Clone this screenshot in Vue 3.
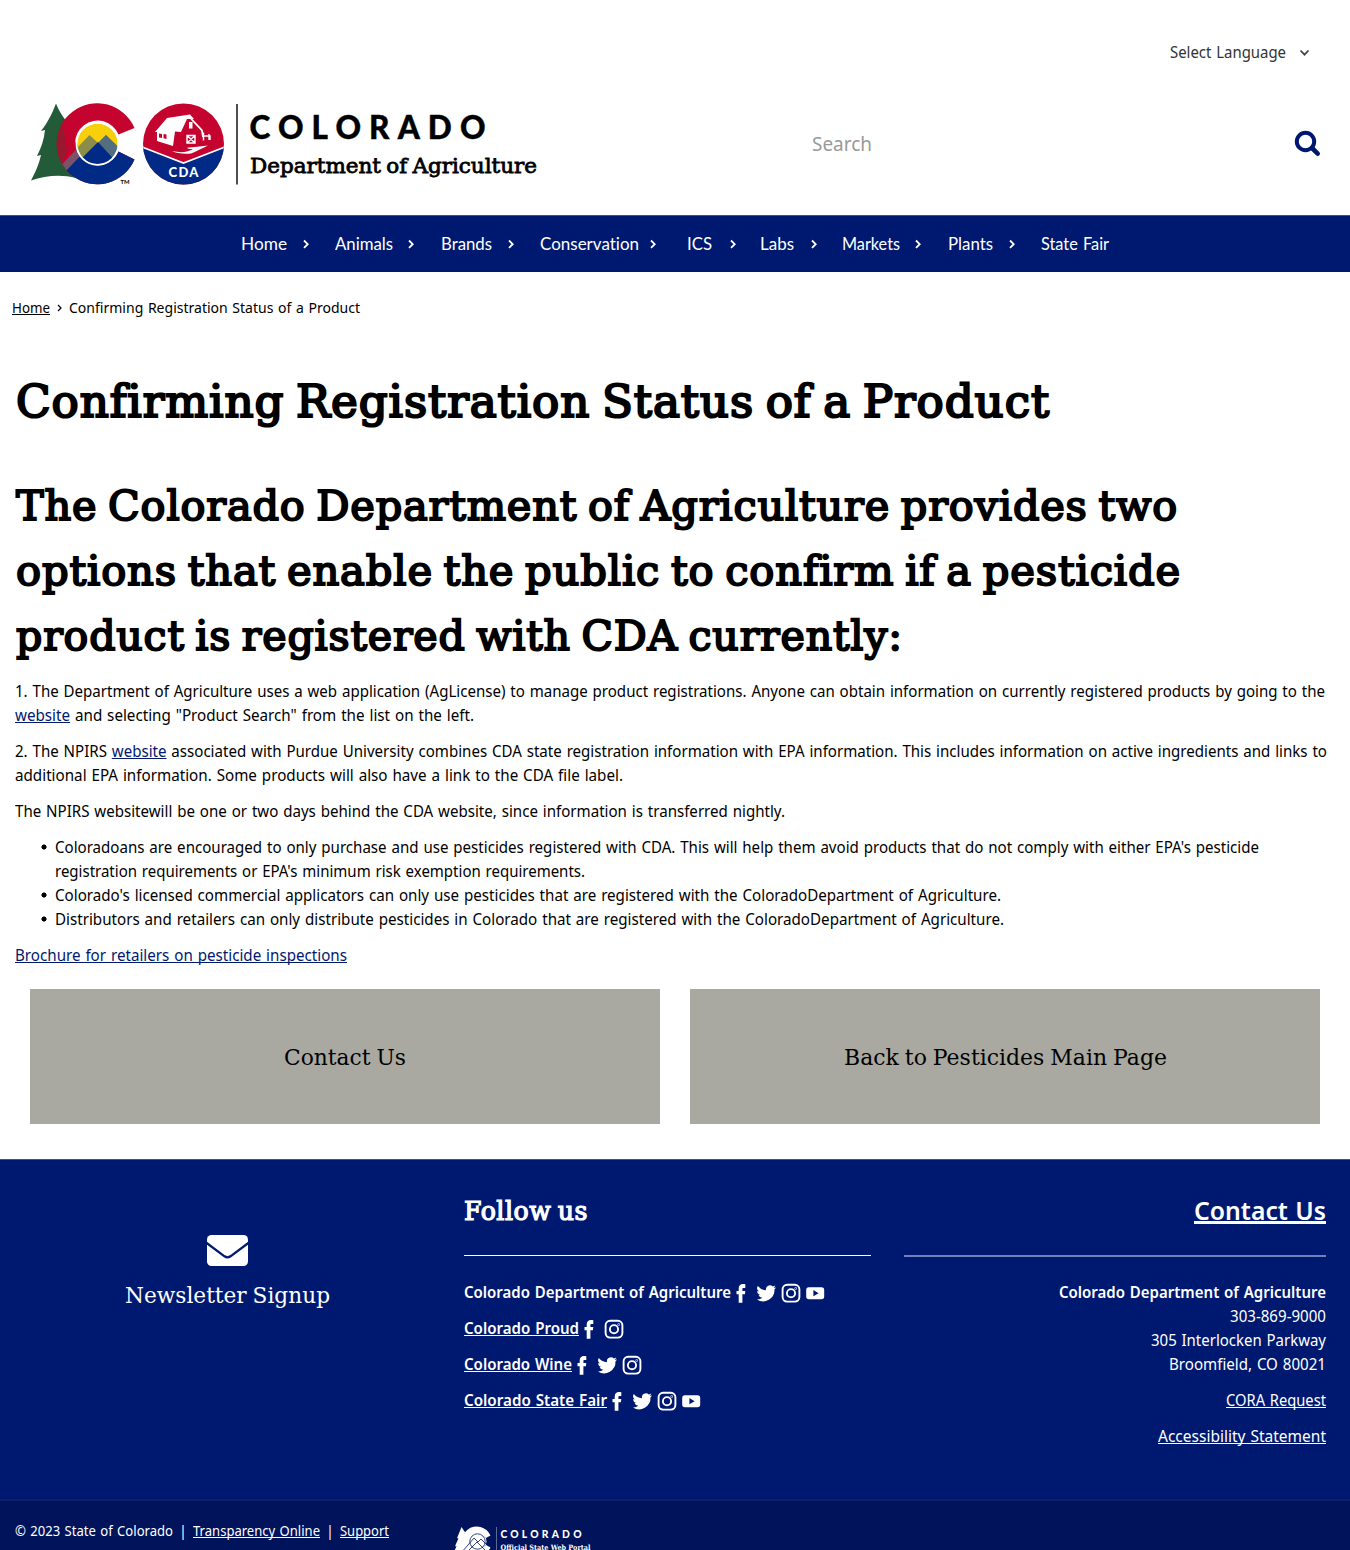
<script setup>
// Condenses a single line of text to the given width in pixels.
const vFit = {
  mounted(el, { value }) {
    const natural = el.getBoundingClientRect().width
    el.style.transform = `scaleX(${value / natural})`
    el.style.marginRight = `${value - natural}px`
  },
}

const menu = [
  { label: 'Home', w: 46, gap: 15, next: 26 },
  { label: 'Animals', w: 58, gap: 14, next: 27 },
  { label: 'Brands', w: 51, gap: 15, next: 26 },
  { label: 'Conservation', w: 99, gap: 10, next: 31 },
  { label: 'ICS', w: 25, gap: 17, next: 24 },
  { label: 'Labs', w: 34, gap: 16, next: 25 },
  { label: 'Markets', w: 58, gap: 14, next: 27 },
  { label: 'Plants', w: 45, gap: 15, next: 26 },
  { label: 'State Fair', w: 68 },
]

const icons = {
  facebook: 'M15.9 7.100h-1.700c-1 0-1.200.5-1.200 1.300V10h2.900l-.4 3.200h-2.500v8.500H9.300v-8.500H7.100V10h2.200V7.500C9.300 4.700 11 3 13.500 3c1 0 2.200.1 2.400.2z',
  twitter: 'M21.500 6.200c-.7.3-1.5.5-2.300.6.8-.5 1.400-1.300 1.700-2.200-.8.4-1.6.8-2.500 1a4 4 0 0 0-6.800 3.6A11.400 11.400 0 0 1 3.400 5a4 4 0 0 0 1.200 5.400c-.6 0-1.3-.2-1.800-.5a4 4 0 0 0 3.200 4c-.6.2-1.2.2-1.800.1a4 4 0 0 0 3.700 2.800A8 8 0 0 1 2.500 18.400a11.400 11.400 0 0 0 17.600-10.100c.6-.6 1.100-1.300 1.400-2.100z',
  youtube: 'M5.500 6.300h12.600q2.700 0 2.700 2.700v6.500q0 2.700-2.700 2.700H5.500q-2.700 0-2.700-2.700V9q0-2.700 2.700-2.700zM10 9v6.300l5.200-3.100z',
}

const social = [
  { label: 'Colorado Department of Agriculture', w: 267, link: false, icons: ['facebook', 'twitter', 'instagram', 'youtube'] },
  { label: 'Colorado Proud', w: 115, link: true, icons: ['facebook', 'instagram'] },
  { label: 'Colorado Wine', w: 108, link: true, icons: ['facebook', 'twitter', 'instagram'] },
  { label: 'Colorado State Fair', w: 143, link: true, icons: ['facebook', 'twitter', 'instagram', 'youtube'] },
]
</script>

<template>
  <div class="page">
    <header>
      <div class="language">
        <span v-fit="116" class="fit">Select Language</span>
        <svg width="12" height="10" viewBox="0 0 12 10"><path d="M2.500 3.500 6.500 7.700l4-4.200" fill="none" stroke="#444" stroke-width="1.800" /></svg>
      </div>
      <div class="brand">
        <svg width="520" height="92" viewBox="25 98 520 92">
          <defs>
            <clipPath id="c-shape"><path d="M134.500 128A40.500 40.500 0 1 0 134.500 159.500L118.500 151.500A22.500 22.500 0 1 1 118.500 134.500Z" /></clipPath>
            <clipPath id="sun"><circle cx="97.500" cy="143.800" r="20.300" /></clipPath>
            <clipPath id="seal"><circle cx="183.500" cy="144" r="40.500" /></clipPath>
          </defs>
          <path d="M56 103.500C59 111 64 119 69 124L66 124C68 132 73 139 78 145L76 178C60 174 45 176 31 180.500C36 171 39 164 41 155L37 156C41 148 44 140 45 130L41 131C48 122 52 114 56 103.500Z" fill="#235b38" />
          <g clip-path="url(#c-shape)">
            <rect x="56" y="103" width="82" height="83" fill="#c4042f" />
            <path d="M60 122 64 131 67 150 61 168 50 150Z" fill="#98182f" />
            <path d="M60 169 86 140 118 151 138 154V186H56Z" fill="#002a86" />
            <path d="M56 171 84 141V152L66 171Z" fill="#7b5267" />
          </g>
          <g clip-path="url(#sun)">
            <rect x="76" y="122" width="43" height="44" fill="#f7cf0a" />
            <path d="M74 151 89.500 135 98 143 106 135 122 150V170H74Z" fill="#8c8d4a" />
            <path d="M98 143 106 135 122 151V168Z" fill="#526f82" />
            <path d="M75 165 98 142 120 166V172H75Z" fill="#002a86" />
          </g>
          <circle cx="97.500" cy="143.800" r="21" fill="none" stroke="#fff" stroke-width="1.800" />
          <text x="120.500" y="183.500" font-family="Lato, sans-serif" font-weight="700" font-size="6" textLength="9" lengthAdjust="spacingAndGlyphs">TM</text>
          <g clip-path="url(#seal)">
            <rect x="142" y="103" width="83" height="83" fill="#c4042f" />
            <path d="M142 147 183.500 163 225 147V186H142Z" fill="#002a86" />
            <path d="M142 147 183.500 163 225 147" fill="none" stroke="#fff" stroke-width="1.800" />
          </g>
          <path d="M155 132 167 118 190 114.500 194 119 187 119 181 132 175 131.500 173 146 157 141V132Z" fill="#fff" />
          <path d="M159 133.500l3 .4v4.200l-3-.6zM163.500 134l3 .4v4.500l-3-.6z" fill="#c4042f" />
          <path d="M188 115.500 202 130.500 203 137" fill="none" stroke="#fff" stroke-width="1.800" />
          <rect x="189" y="122" width="3.500" height="6.500" fill="#fff" />
          <path d="M187 135.500h8v7.500h-8zM187 135.500l8 7.500M195 135.500l-8 7.500M203.500 132.500v8M204 136h6v4M209 134v6" fill="none" stroke="#fff" stroke-width="1.400" />
          <path d="M172 151q13 3 21-2-6 0-6-1.200 10-1 21-2.300-10 5-17 8-12 1-19-2.500z" fill="#fff" />
          <text x="168.500" y="176.500" font-family="Lato, sans-serif" font-weight="900" font-size="13" fill="#fff" textLength="30">CDA</text>
          <path d="M237 104v80.500" stroke="#222" stroke-width="1.600" />
          <text x="249.500" y="138.500" font-family="Lato, sans-serif" font-weight="900" font-size="31.500" stroke="#000" stroke-width=".4" textLength="236">COLORADO</text>
          <text x="250" y="173" font-family="'DejaVu Serif', serif" font-size="21" stroke="#000" stroke-width=".8" word-spacing="-1.500" textLength="287" lengthAdjust="spacingAndGlyphs">Department of Agriculture</text>
        </svg>
        <div class="search">
          <span v-fit="60" class="fit">Search</span>
          <svg width="28" height="28" viewBox="0 0 28 28" fill="none" stroke="#00176f"><circle cx="11.500" cy="11.500" r="8.700" stroke-width="4" /><path d="m18 18 5.700 5.700" stroke-width="4.600" stroke-linecap="round" /></svg>
        </div>
      </div>
    </header>

    <nav class="menu">
      <template v-for="m in menu" :key="m.label">
        <a v-fit="m.w" class="fit">{{ m.label }}</a>
        <svg v-if="m.gap" :style="{ marginLeft: m.gap + 'px', marginRight: m.next - 1 + 'px' }" width="8" height="12" viewBox="0 0 8 12"><path d="m2 2.500 3.700 3.700L2 9.900" fill="none" stroke="#fff" stroke-width="1.800" /></svg>
      </template>
    </nav>

    <main>
      <div class="crumbs">
        <a v-fit="38" class="fit">Home</a>
        <svg width="6" height="10" viewBox="0 0 6 10"><path d="m1 3 3 3-3 3" fill="none" stroke="#000" stroke-width="1.200" /></svg>
        <span v-fit="291" class="fit">Confirming Registration Status of a Product</span>
      </div>
      <h1><span v-fit="1034" class="fit">Confirming Registration Status of a Product</span></h1>
      <h2>
        <span v-fit="1162" class="fit">The Colorado Department of Agriculture provides two</span>
        <span v-fit="1165" class="fit">options that enable the public to confirm if a pesticide</span>
        <span v-fit="887" class="fit">product is registered with CDA currently:</span>
      </h2>
      <p>
        <span v-fit="1310" class="fit">1. The Department of Agriculture uses a web application (AgLicense) to manage product registrations. Anyone can obtain information on currently registered products by going to the</span>
        <span v-fit="459" class="fit"><a>website</a> and selecting "Product Search" from the list on the left.</span>
      </p>
      <p>
        <span v-fit="1312" class="fit">2. The NPIRS <a>website</a> associated with Purdue University combines CDA state registration information with EPA information. This includes information on active ingredients and links to</span>
        <span v-fit="608" class="fit">additional EPA information. Some products will also have a link to the CDA file label.</span>
      </p>
      <p><span v-fit="770" class="fit">The NPIRS websitewill be one or two days behind the CDA website, since information is transferred nightly.</span></p>
      <ul>
        <li>
          <span v-fit="1204" class="fit">Coloradoans are encouraged to only purchase and use pesticides registered with CDA. This will help them avoid products that do not comply with either EPA's pesticide</span>
          <span v-fit="530" class="fit">registration requirements or EPA's minimum risk exemption requirements.</span>
        </li>
        <li><span v-fit="946" class="fit">Colorado's licensed commercial applicators can only use pesticides that are registered with the ColoradoDepartment of Agriculture.</span></li>
        <li><span v-fit="949" class="fit">Distributors and retailers can only distribute pesticides in Colorado that are registered with the ColoradoDepartment of Agriculture.</span></li>
      </ul>
      <p><a v-fit="332" class="fit">Brochure for retailers on pesticide inspections</a></p>
      <div class="buttons">
        <a><span v-fit="122" class="fit">Contact Us</span></a>
        <a><span v-fit="323" class="fit">Back to Pesticides Main Page</span></a>
      </div>
    </main>

    <footer>
      <div class="columns">
        <div class="newsletter">
          <svg width="41" height="31" viewBox="0 0 41 31">
            <rect width="41" height="31" rx="4.500" fill="#fff" />
            <path d="M-1 7.500 17.500 21.300q3 2 6 0L42 7.500" fill="none" stroke="#001970" stroke-width="2.300" />
          </svg>
          <span v-fit="205" class="fit">Newsletter Signup</span>
        </div>
        <div class="follow">
          <h3><span v-fit="124" class="fit">Follow us</span></h3>
          <div v-for="s in social" :key="s.label" class="row">
            <span v-fit="s.w" class="fit" :class="{ link: s.link }">{{ s.label }}</span>
            <span class="icons">
              <svg v-for="i in s.icons" :key="i" width="24.800" height="24" viewBox="0 0 24 24">
                <g v-if="i === 'instagram'" fill="none" stroke="#fff" stroke-width="1.900">
                  <rect x="3.200" y="3.800" width="16.800" height="16.800" rx="4.500" /><circle cx="11.600" cy="12.200" r="4.100" /><circle cx="16.300" cy="7.500" r=".3" />
                </g>
                <path v-else :d="icons[i]" fill="#fff" fill-rule="evenodd" />
              </svg>
            </span>
          </div>
        </div>
        <div class="contact">
          <h3><a v-fit="132" class="fit">Contact Us</a></h3>
          <div><b v-fit="267" class="fit">Colorado Department of Agriculture</b></div>
          <div><span v-fit="96" class="fit">303-869-9000</span></div>
          <div><span v-fit="175" class="fit">305 Interlocken Parkway</span></div>
          <div><span v-fit="157" class="fit">Broomfield, CO 80021</span></div>
          <div class="spaced"><a v-fit="100" class="fit">CORA Request</a></div>
          <div class="spaced"><a v-fit="168" class="fit">Accessibility Statement</a></div>
        </div>
      </div>
      <div class="legal">
        <div class="legal-links">
          <span v-fit="158" class="fit">© 2023 State of Colorado</span><i>|</i>
          <a v-fit="127" class="fit">Transparency Online</a><i>|</i>
          <a v-fit="49" class="fit">Support</a>
        </div>
        <svg width="140" height="48" viewBox="452 1521 140 48">
          <path d="M461.500 1527l4 6-1.500.3 5 8-1 16-15.500-2 4-9-1.500 0 3.500-8-1.500 0z" fill="#fff" />
          <path d="M490.500 1535.500A15 15 0 1 0 490.500 1547.500L486 1545A8 8 0 1 1 486 1538Z" fill="#fff" />
          <circle cx="477" cy="1541.500" r="9.500" fill="#fff" />
          <circle cx="477.500" cy="1541.500" r="7.700" fill="none" stroke="#00135b" stroke-width=".8" />
          <path d="m462 1552 12-14 4 4 3-3 5 5M469 1550l8-8 8 8" fill="none" stroke="#00135b" stroke-width=".8" />
          <path d="M496.500 1527v35" stroke="#8490b5" stroke-width=".7" />
          <text x="500.500" y="1538" font-family="Lato, sans-serif" font-weight="900" font-size="10.300" fill="#fff" textLength="81">COLORADO</text>
          <text x="500.500" y="1549.800" font-family="'DejaVu Serif', serif" font-weight="700" font-size="7.300" fill="#fff" textLength="90" lengthAdjust="spacingAndGlyphs">Official State Web Portal</text>
        </svg>
      </div>
    </footer>
  </div>
</template>

<style>
body { margin: 0; }
</style>

<style scoped>
* { box-sizing: border-box; }
.page {
  width: 1350px;
  height: 1550px;
  overflow: hidden;
  background: #fff;
  color: #000;
  font: 16px/24px "Noto Sans", "Open Sans", sans-serif;
  word-spacing: 1px;
}
.fit { display: inline-block; white-space: nowrap; transform-origin: 0 50%; flex: none; }
svg { display: block; flex: none; word-spacing: 0; }

header { height: 215px; padding-top: 40px; }
.language { display: flex; align-items: center; justify-content: flex-end; gap: 12px; padding-right: 40px; color: #333; }
.brand { display: flex; align-items: center; height: 92px; margin-top: 34px; padding-left: 25px; }
.search { display: flex; justify-content: space-between; align-items: center; width: 510px; margin-left: 267px; font-size: 20px; color: #999; }

.menu { display: flex; align-items: center; height: 57px; padding: 0 0 1px 241px; background: #001970; border-top: 1px solid #3f4f8c; color: #fff; font-family: Lato, "Noto Sans", sans-serif; font-size: 16.500px; font-variant-ligatures: none; }
.menu svg { margin-top: 1px; }

main { height: 887px; padding: 23px 15px 0; }
.crumbs { display: flex; align-items: center; gap: 7px; margin-left: -3px; font-size: 14.500px; }
.crumbs span { margin-left: -1px; }
.crumbs a, p a, .link, .contact a, .legal a { text-decoration: underline; text-decoration-thickness: 1.400px; text-underline-offset: 1.400px; text-decoration-skip-ink: none; }
h1, h2, h3 { margin: 0; font-family: "DejaVu Serif", serif; font-weight: 400; word-spacing: -.08em; letter-spacing: .02em; }
h1 { margin-top: 47px; padding-left: 1px; font-size: 45.500px; line-height: 72px; -webkit-text-stroke: 2.200px #000; }
h2 { display: flex; flex-direction: column; align-items: flex-start; margin-top: 35px; padding-left: 1px; font-size: 41.500px; line-height: 65px; -webkit-text-stroke: 2px #000; }
p { display: flex; flex-direction: column; align-items: flex-start; margin: 12px 0 0; }
h2 + p { margin-top: 11px; }
p a { color: #001970; }
ul { margin: 12px 0 0; padding-left: 25px; list-style: none; }
li { padding-left: 15px; background: radial-gradient(circle, #000 2.200px, transparent 2.900px) 1px 9px / 6px 6px no-repeat; }
li > .fit { vertical-align: top; }
.buttons { display: flex; gap: 30px; margin: 22px 15px 0; }
.buttons a { display: flex; flex: 1; align-items: center; justify-content: center; height: 135px; padding-top: 2px; background: #a9a9a1; font-family: "DejaVu Serif", serif; font-size: 22px; word-spacing: -1px; }

footer { background: #001970; color: #fff; border-top: 1px solid #40508b; }
.columns { display: flex; height: 339px; }
.newsletter { display: flex; flex-direction: column; align-items: center; width: 455px; padding-top: 75px; font-family: "DejaVu Serif", serif; font-size: 22px; line-height: 30px; gap: 15px; word-spacing: -1px; }
h3 { height: 62px; border-bottom: 1px solid #fff; font-size: 25.500px; line-height: 34px; }
.follow { width: 407px; margin-left: 9px; padding-top: 34px; font-weight: 600; }
.follow h3 { margin-bottom: 24px; -webkit-text-stroke: 1.200px #fff; }
.row { display: flex; align-items: center; height: 24px; margin-bottom: 12px; }
.icons { display: flex; margin: 2px 0 0 -2px; }
.contact { width: 422px; margin-left: 33px; padding-top: 34px; text-align: right; }
.contact h3 { margin-bottom: 24px; border-bottom: 2px solid #7180bb; height: 63px; line-height: 33px; font-family: "Noto Sans", sans-serif; font-weight: 600; letter-spacing: 0; word-spacing: 1px; }
.contact h3 a { text-decoration-thickness: 2.500px; }
.contact h3 + div { margin-top: -1px; }
.contact b { font-weight: 600; }
.contact .spaced { margin-top: 12px; }
.legal { display: flex; height: 60px; padding: 20px 0 0 15px; background: #00135b; border-top: 2px solid #0b2169; }
.legal-links { display: flex; width: 437px; height: 20px; line-height: 20px; font-size: 13.500px; }
.legal i { width: 20px; text-align: center; font-style: normal; }
</style>
